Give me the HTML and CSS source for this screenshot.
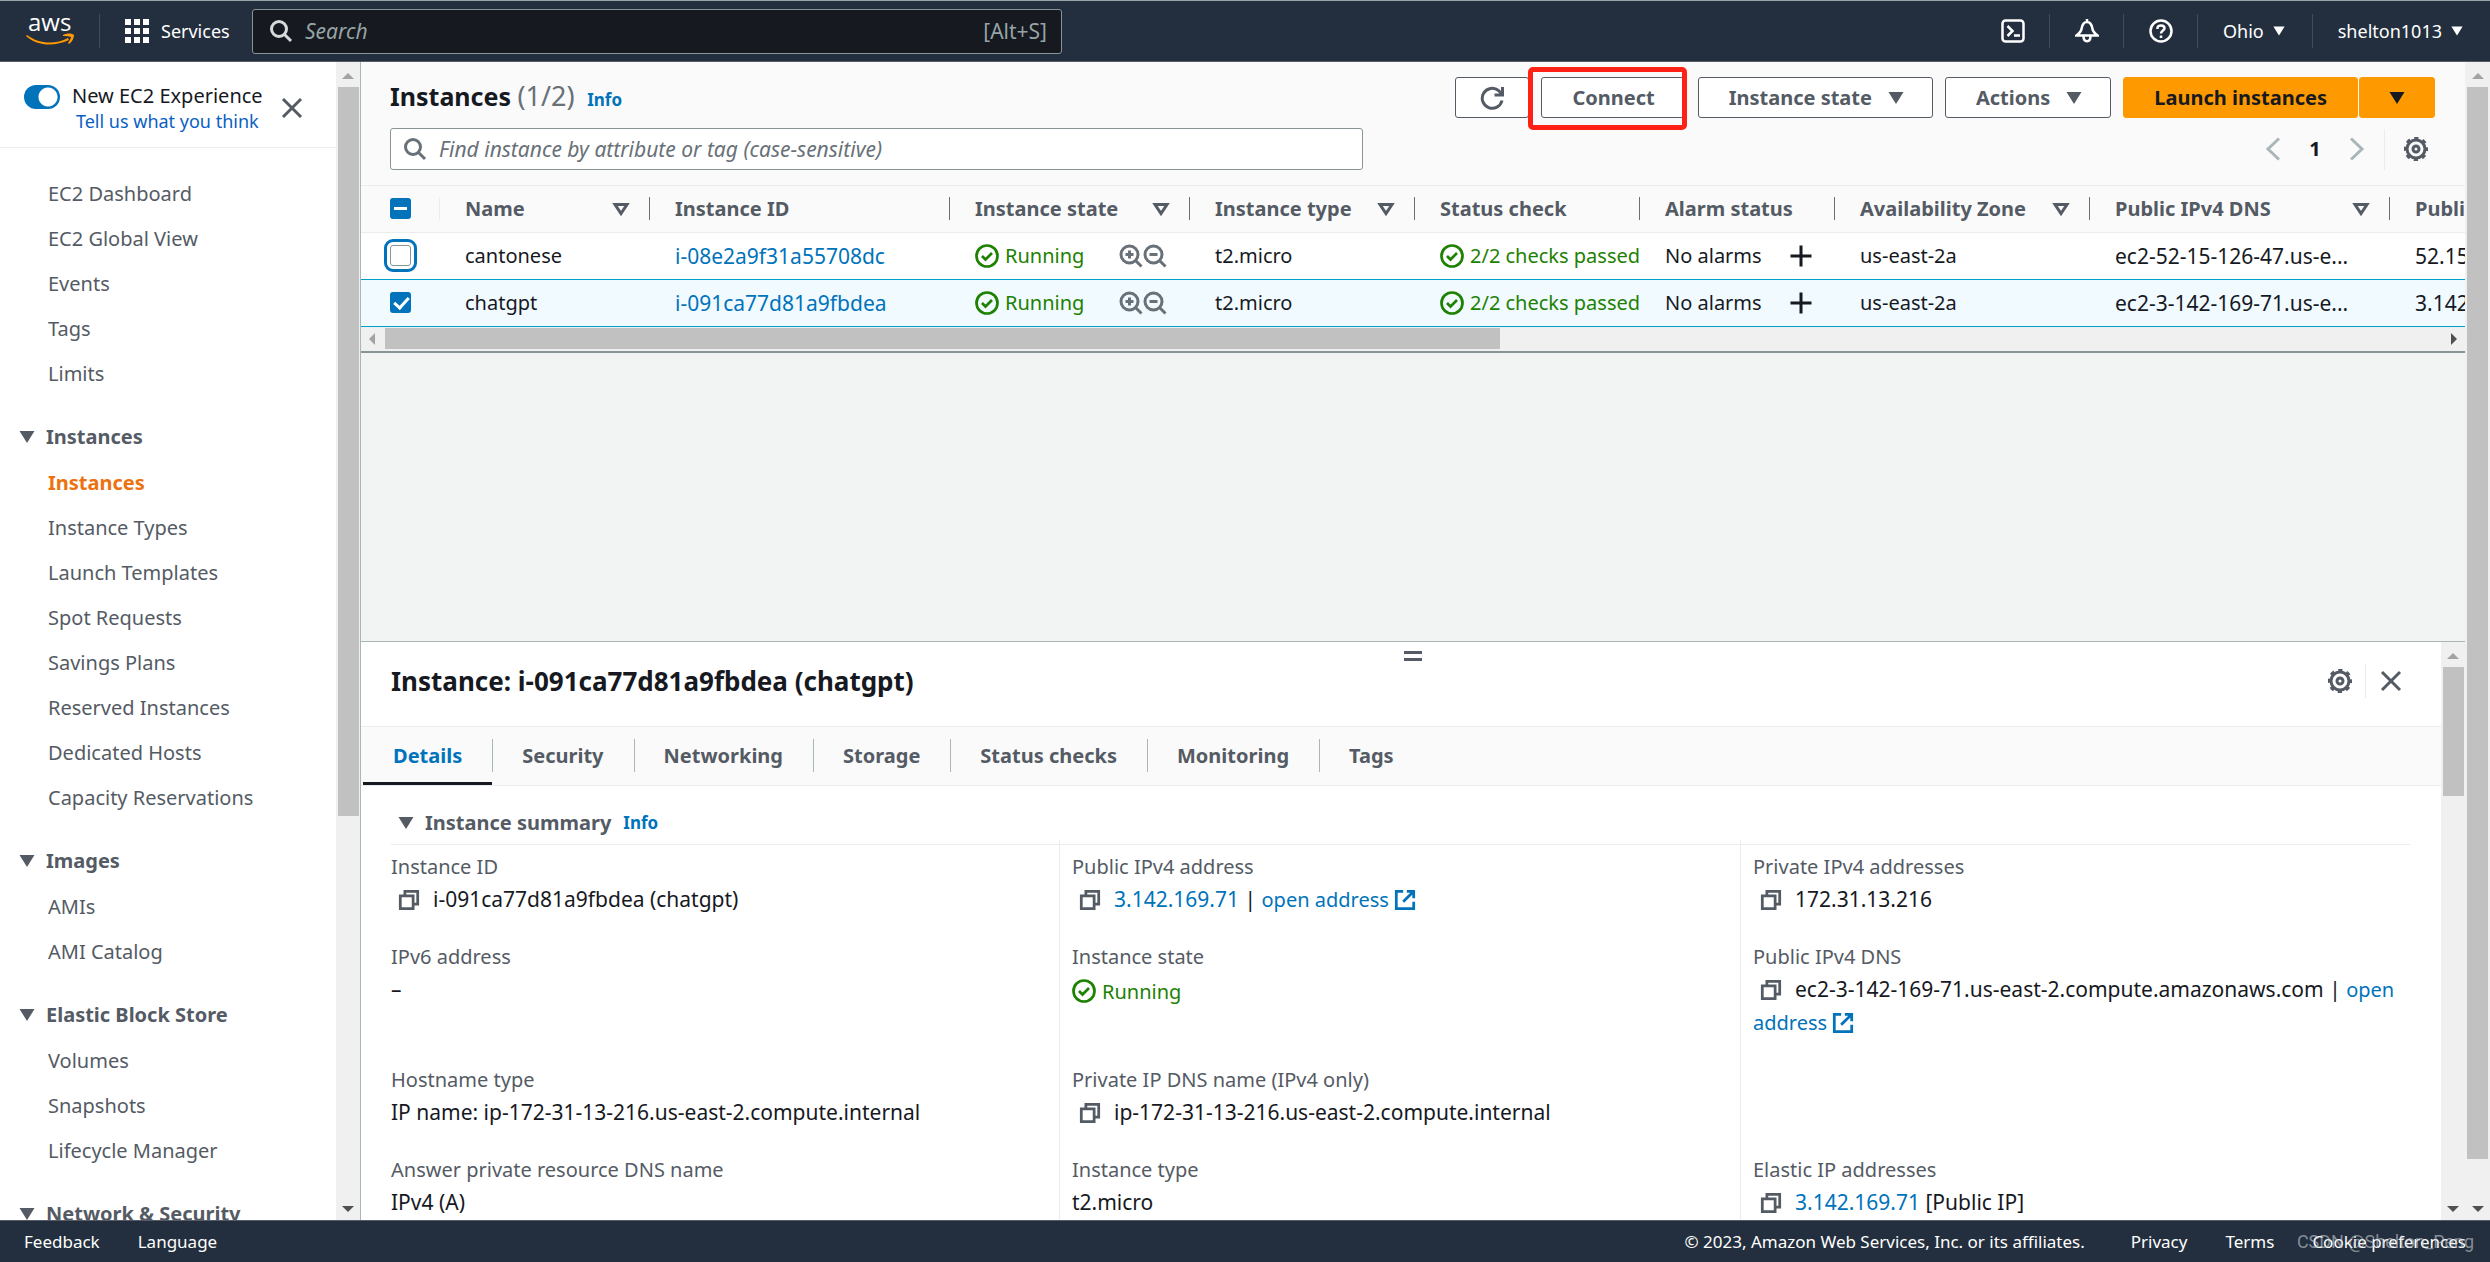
FILE: index.html
```html
<!DOCTYPE html>
<html lang="en">
<head>
	<meta charset="utf-8">
	<title>Instances | EC2 Management Console</title>
	<link rel="stylesheet" href="styles.css">
</head>
<body>
	<!-- icons -->
	<svg class="defs" width="0" height="0">
		<symbol id="search" viewBox="0 0 24 24"><circle cx="10" cy="10" r="7.5"/><path d="M15.5 15.5L22 22"/></symbol>
		<symbol id="close" viewBox="0 0 24 24"><path d="M3 3L21 21M21 3L3 21"/></symbol>
		<symbol id="down" viewBox="0 0 24 24"><path class="solid" d="M4.500 6h15L12 18z"/></symbol>
		<symbol id="sort" viewBox="0 0 24 24"><path d="M6 7.500h12L12 16.500z"/></symbol>
		<symbol id="check" viewBox="0 0 24 24"><circle cx="12" cy="12" r="10.5"/><path d="M7 12L10.500 15.500L17 9"/></symbol>
		<symbol id="zoomin" viewBox="0 0 24 24"><circle cx="10.500" cy="10.500" r="8.500"/><path d="M16.500 16.500L22.500 22.500M6.500 10.500h8M10.500 6.500v8"/></symbol>
		<symbol id="zoomout" viewBox="0 0 24 24"><circle cx="10.500" cy="10.500" r="8.500"/><path d="M16.500 16.500L22.500 22.500M6.500 10.500h8"/></symbol>
		<symbol id="plus" viewBox="0 0 24 24"><path d="M12 1.500v21M1.500 12h21"/></symbol>
		<symbol id="copy" viewBox="0 0 24 24"><path d="M2.500 7.500h14v14h-14z"/><path d="M7.500 7V2.500h14v14H17"/></symbol>
		<symbol id="external" viewBox="0 0 24 24"><path d="M10 2.500H2.500v19h19V14M14 2.500h7.500V10M21 3L10 14"/></symbol>
		<symbol id="gear" viewBox="0 0 24 24"><circle cx="12" cy="12" r="9"/><circle cx="12" cy="12" r="10.800" stroke-dasharray="4.200 4.280" stroke-dashoffset="2.100"/><circle cx="12" cy="12" r="3"/></symbol>
		<symbol id="prev" viewBox="0 0 24 24"><path d="M18 1.500L7 12L18 22.500"/></symbol>
		<symbol id="next" viewBox="0 0 24 24"><path d="M6 1.500L17 12L6 22.500"/></symbol>
		<symbol id="refresh" viewBox="0 0 24 24"><path d="M22 14.500A10 10 0 1 1 18.500 4.500L22 8M22.500 1v8h-8"/></symbol>
		<symbol id="shell" viewBox="0 0 24 24"><rect x="1.500" y="1.500" width="21" height="21" rx="3"/><path d="M6.500 7L11.500 12L6.500 17M13 16.500h6"/></symbol>
		<symbol id="bell" viewBox="0 0 24 24"><path d="M12 0v3M12 3C7.500 3 7 7 6.500 10C6 13 4 14.500 1.500 16.500H22.500C20 14.500 18 13 17.500 10C17 7 16.500 3 12 3zM8.500 17C8.500 24 15.500 24 15.500 17"/></symbol>
		<symbol id="help" viewBox="0 0 24 24"><circle cx="12" cy="12" r="10.500"/><path d="M8.500 10V9C8.500 5.500 15.500 5.500 15.500 9.200C15.500 11.500 12 11.500 12 14.500M12 16.500v2.500"/></symbol>
		<symbol id="grid" viewBox="0 0 24 24"><path class="solid" d="M0 0h6v6H0zM9 0h6v6H9zM18 0h6v6h-6zM0 9h6v6H0zM9 9h6v6H9zM18 9h6v6h-6zM0 18h6v6H0zM9 18h6v6H9zM18 18h6v6h-6z"/></symbol>
	</svg>

	<header class="topbar">
		<a class="logo" href="#" aria-label="AWS home">
			<svg width="50" height="34" viewBox="0 0 50 34">
				<text x="2" y="17">aws</text>
				<path class="smile" d="M1 21C13 30 29 31 42 24L43 26C28 33 11 32 0 22z"/>
				<path class="smile" d="M37 21C41 19 46 19 48 21C48 24 46 28 43 30L42 29C44 26 45 24 45 23C43 22 40 22 37 22z"/>
			</svg>
		</a>
		<button class="services"><svg class="icon"><use href="#grid"/></svg>Services</button>
		<label class="search dark">
			<svg class="icon"><use href="#search"/></svg>
			<input type="text" placeholder="Search" aria-label="Search">
			<span>[Alt+S]</span>
		</label>
		<div class="tools">
			<button aria-label="CloudShell"><svg class="icon"><use href="#shell"/></svg></button>
			<button aria-label="Notifications"><svg class="icon"><use href="#bell"/></svg></button>
			<button aria-label="Help"><svg class="icon"><use href="#help"/></svg></button>
			<button>Ohio<svg class="caret"><use href="#down"/></svg></button>
			<button>shelton1013<svg class="caret"><use href="#down"/></svg></button>
		</div>
	</header>

	<div class="page">
		<aside class="sidebar">
			<div class="side-content">
				<div class="experience">
					<input type="checkbox" class="toggle" id="newexp" checked>
					<div class="exp-text">
						<label for="newexp">New EC2 Experience</label>
						<a href="#">Tell us what you think</a>
					</div>
					<button class="plain" aria-label="Close navigation"><svg class="icon"><use href="#close"/></svg></button>
				</div>
				<nav>
					<ul>
						<li><a href="#">EC2 Dashboard</a></li>
						<li><a href="#">EC2 Global View</a></li>
						<li><a href="#">Events</a></li>
						<li><a href="#">Tags</a></li>
						<li><a href="#">Limits</a></li>
					</ul>
					<h3><svg class="icon"><use href="#down"/></svg>Instances</h3>
					<ul>
						<li><a class="current" href="#">Instances</a></li>
						<li><a href="#">Instance Types</a></li>
						<li><a href="#">Launch Templates</a></li>
						<li><a href="#">Spot Requests</a></li>
						<li><a href="#">Savings Plans</a></li>
						<li><a href="#">Reserved Instances</a></li>
						<li><a href="#">Dedicated Hosts</a></li>
						<li><a href="#">Capacity Reservations</a></li>
					</ul>
					<h3><svg class="icon"><use href="#down"/></svg>Images</h3>
					<ul>
						<li><a href="#">AMIs</a></li>
						<li><a href="#">AMI Catalog</a></li>
					</ul>
					<h3><svg class="icon"><use href="#down"/></svg>Elastic Block Store</h3>
					<ul>
						<li><a href="#">Volumes</a></li>
						<li><a href="#">Snapshots</a></li>
						<li><a href="#">Lifecycle Manager</a></li>
					</ul>
					<h3><svg class="icon"><use href="#down"/></svg>Network &amp; Security</h3>
				</nav>
			</div>
			<div class="scroll side-scroll"><i class="up"></i><b></b><i class="dn"></i></div>
		</aside>

		<main>
			<section class="list">
				<div class="list-head">
					<div class="title-row">
						<h1>Instances <span>(1/2)</span> <a class="info" href="#">Info</a></h1>
						<div class="actions">
							<button class="btn" aria-label="Refresh"><svg class="icon"><use href="#refresh"/></svg></button>
							<div class="marked"><button class="btn">Connect</button></div>
							<button class="btn">Instance state<svg class="icon"><use href="#down"/></svg></button>
							<button class="btn">Actions<svg class="icon"><use href="#down"/></svg></button>
							<div class="split">
								<button class="btn primary">Launch instances</button>
								<button class="btn primary" aria-label="More launch options"><svg class="icon"><use href="#down"/></svg></button>
							</div>
						</div>
					</div>
					<div class="filter-row">
						<label class="search">
							<svg class="icon"><use href="#search"/></svg>
							<input type="text" placeholder="Find instance by attribute or tag (case-sensitive)" aria-label="Find instance">
						</label>
						<div class="pager">
							<button class="plain arrow" aria-label="Previous page"><svg class="icon"><use href="#prev"/></svg></button>
							<strong>1</strong>
							<button class="plain arrow" aria-label="Next page"><svg class="icon"><use href="#next"/></svg></button>
							<button class="plain settings" aria-label="Preferences"><svg class="icon"><use href="#gear"/></svg></button>
						</div>
					</div>
				</div>

				<div class="table-wrap">
					<table>
						<colgroup>
							<col class="c-check"><col class="c-name"><col class="c-id"><col class="c-state"><col class="c-type">
							<col class="c-status"><col class="c-alarm"><col class="c-zone"><col class="c-dns"><col class="c-ip">
						</colgroup>
						<thead>
							<tr>
								<th><div><input type="checkbox" class="box some" aria-label="Select all"></div></th>
								<th><div>Name<svg class="icon"><use href="#sort"/></svg></div></th>
								<th><div>Instance ID</div></th>
								<th><div>Instance state<svg class="icon"><use href="#sort"/></svg></div></th>
								<th><div>Instance type<svg class="icon"><use href="#sort"/></svg></div></th>
								<th><div>Status check</div></th>
								<th><div>Alarm status</div></th>
								<th><div>Availability Zone<svg class="icon"><use href="#sort"/></svg></div></th>
								<th><div>Public IPv4 DNS<svg class="icon"><use href="#sort"/></svg></div></th>
								<th><div>Public IPv4</div></th>
							</tr>
						</thead>
						<tbody>
							<tr>
								<td><input type="checkbox" class="box focused" aria-label="Select cantonese"></td>
								<td>cantonese</td>
								<td class="num"><a href="#">i-08e2a9f31a55708dc</a></td>
								<td><div class="state"><span class="ok"><svg class="icon"><use href="#check"/></svg>Running</span><svg class="icon"><use href="#zoomin"/></svg><svg class="icon"><use href="#zoomout"/></svg></div></td>
								<td>t2.micro</td>
								<td><span class="ok"><svg class="icon"><use href="#check"/></svg>2/2 checks passed</span></td>
								<td><div class="alarm">No alarms<svg class="icon"><use href="#plus"/></svg></div></td>
								<td>us-east-2a</td>
								<td class="num">ec2-52-15-126-47.us-e...</td>
								<td class="num">52.15.126.47</td>
							</tr>
							<tr class="selected">
								<td><input type="checkbox" class="box" aria-label="Select chatgpt" checked></td>
								<td>chatgpt</td>
								<td class="num"><a href="#">i-091ca77d81a9fbdea</a></td>
								<td><div class="state"><span class="ok"><svg class="icon"><use href="#check"/></svg>Running</span><svg class="icon"><use href="#zoomin"/></svg><svg class="icon"><use href="#zoomout"/></svg></div></td>
								<td>t2.micro</td>
								<td><span class="ok"><svg class="icon"><use href="#check"/></svg>2/2 checks passed</span></td>
								<td><div class="alarm">No alarms<svg class="icon"><use href="#plus"/></svg></div></td>
								<td>us-east-2a</td>
								<td class="num">ec2-3-142-169-71.us-e...</td>
								<td class="num">3.142.169.71</td>
							</tr>
						</tbody>
					</table>
				</div>
				<div class="hscroll"><i class="lt"></i><b></b><i class="rt"></i></div>
			</section>

			<section class="panel">
				<div class="handle"></div>
				<div class="panel-content">
					<div class="panel-head">
						<h2>Instance: i-091ca77d81a9fbdea (chatgpt)</h2>
						<div class="panel-tools">
							<button class="plain" aria-label="Panel preferences"><svg class="icon"><use href="#gear"/></svg></button>
							<button class="plain" aria-label="Close panel"><svg class="icon"><use href="#close"/></svg></button>
						</div>
					</div>
					<div class="tabs">
						<button class="active">Details</button>
						<button>Security</button>
						<button>Networking</button>
						<button>Storage</button>
						<button>Status checks</button>
						<button>Monitoring</button>
						<button>Tags</button>
					</div>
					<div class="summary">
						<h3><svg class="icon"><use href="#down"/></svg>Instance summary <a class="info" href="#">Info</a></h3>
						<dl>
							<div><dt>Instance ID</dt><dd><svg class="icon copy"><use href="#copy"/></svg>i-091ca77d81a9fbdea (chatgpt)</dd></div>
							<div><dt>Public IPv4 address</dt><dd><svg class="icon copy"><use href="#copy"/></svg><a href="#">3.142.169.71</a> | <a class="open" href="#">open address <svg class="icon"><use href="#external"/></svg></a></dd></div>
							<div><dt>Private IPv4 addresses</dt><dd><svg class="icon copy"><use href="#copy"/></svg>172.31.13.216</dd></div>

							<div><dt>IPv6 address</dt><dd>–</dd></div>
							<div><dt>Instance state</dt><dd><span class="ok"><svg class="icon"><use href="#check"/></svg>Running</span></dd></div>
							<div><dt>Public IPv4 DNS</dt><dd><svg class="icon copy"><use href="#copy"/></svg>ec2-3-142-169-71.us-east-2.compute.amazonaws.com | <a class="open" href="#">open address <svg class="icon"><use href="#external"/></svg></a></dd></div>

							<div><dt>Hostname type</dt><dd>IP name: ip-172-31-13-216.us-east-2.compute.internal</dd></div>
							<div><dt>Private IP DNS name (IPv4 only)</dt><dd><svg class="icon copy"><use href="#copy"/></svg>ip-172-31-13-216.us-east-2.compute.internal</dd></div>
							<div></div>

							<div><dt>Answer private resource DNS name</dt><dd>IPv4 (A)</dd></div>
							<div><dt>Instance type</dt><dd>t2.micro</dd></div>
							<div><dt>Elastic IP addresses</dt><dd><svg class="icon copy"><use href="#copy"/></svg><a href="#">3.142.169.71</a> [Public IP]</dd></div>
						</dl>
					</div>
				</div>
				<div class="scroll panel-scroll"><i class="up"></i><b></b><i class="dn"></i></div>
			</section>
		</main>
		<div class="scroll page-scroll"><i class="up"></i><b></b><i class="dn"></i></div>
	</div>

	<footer>
		<a href="#">Feedback</a>
		<a href="#">Language</a>
		<span class="copyright">© 2023, Amazon Web Services, Inc. or its affiliates.</span>
		<a href="#">Privacy</a>
		<a href="#">Terms</a>
		<a href="#">Cookie preferences</a>
		<span class="watermark">CSDN @Shelton_Peng</span>
	</footer>
</body>
</html>
```

FILE: styles.css
```css
*{
	box-sizing: border-box;
	margin: 0;
	padding: 0;
}
body{
	height: 100vh;
	display: flex;
	flex-direction: column;
	overflow: hidden;
	font: 20px/30px "Noto Sans", "Open Sans", sans-serif;
	color: #16191f;
	background: #f2f3f3;
}
a{
	color: #0073bb;
	text-decoration: none;
}
ul{
	list-style: none;
}
button, input{
	font: inherit;
	color: inherit;
	border: 0;
	background: none;
}
.defs{
	position: absolute;
}
.icon{
	width: 24px;
	height: 24px;
	flex: none;
	fill: none;
	stroke: currentColor;
	stroke-width: 3;
}
.caret{
	width: 18px;
	height: 18px;
}
.solid{
	fill: currentColor;
	stroke: none;
}
.plain{
	display: flex;
	color: #545b64;
}

/* top bar */
.topbar{
	flex: none;
	display: flex;
	align-items: center;
	height: 62px;
	padding-right: 24px;
	border-top: 1px solid #95a5a6;
	border-bottom: 1px solid #545b64;
	background: #232f3e;
	color: #fff;
	font-size: 18px;
}
.logo{
	height: 34px;
	width: 100px;
	padding-left: 26px;
	border-right: 1px solid #414d5c;
}
.logo svg{
	display: block;
	overflow: visible;
}
.logo text{
	font: 500 24px "Open Sans", sans-serif;
	fill: #fff;
}
.smile{
	fill: #ff9900;
}
.services{
	display: flex;
	align-items: center;
	gap: 12px;
	width: 152px;
	padding-left: 25px;
}
.search{
	display: flex;
	align-items: center;
	gap: 12px;
	height: 42px;
	padding: 0 12px;
	border: 1px solid #879596;
	border-radius: 3px;
	background: #fff;
	color: #687078;
	font-size: 21px;
}
.search input{
	flex: 1;
	min-width: 0;
	outline: 0;
}
.search input::placeholder{
	color: inherit;
	font-style: italic;
	opacity: 1;
}
.dark{
	width: 810px;
	height: 45px;
	padding: 0 14px 0 16px;
	background: #16191f;
	color: #95a5a6;
}
.dark .icon{
	color: #d5dbdb;
}
.tools{
	display: flex;
	margin-left: auto;
}
.tools button{
	display: flex;
	align-items: center;
	gap: 6px;
	height: 34px;
	padding: 0 24px 0 25px;
	border-left: 1px solid #414d5c;
}
.tools button:first-child{
	border: 0;
}
.tools button:last-child{
	padding-right: 0;
}
.tools .icon{
	stroke-width: 2.5;
}

.page{
	flex: 1;
	min-height: 0;
	display: flex;
}

/* scroll bars */
.scroll{
	flex: none;
	width: 24px;
	display: flex;
	flex-direction: column;
	align-items: center;
	padding-top: 5px;
	background: #f0f0f0;
}
.scroll b{
	width: 21px;
	background: #c1c1c1;
}
.scroll i, .hscroll i{
	border: 6px solid transparent;
}
.up{
	margin-bottom: 8px;
	border-bottom-color: #a3a3a3 !important;
}
.dn{
	margin: auto 0 2px;
	border-top-color: #505050 !important;
}
.side-scroll b{
	height: 729px;
}
.page-scroll{
	width: 25px;
}
.page-scroll b{
	height: 93%;
}
.panel-scroll b{
	height: 129px;
}

/* sidebar */
.sidebar{
	flex: none;
	display: flex;
	width: 361px;
	background: #fff;
	border-right: 1px solid #aab7b8;
}
.side-content{
	flex: 1;
	overflow: hidden;
	color: #545b64;
}
.experience{
	display: flex;
	align-items: flex-start;
	height: 86px;
	padding: 20px 0 0 24px;
	border-bottom: 1px solid #eaeded;
	color: #16191f;
}
.toggle{
	appearance: none;
	width: 36px;
	height: 24px;
	margin: 3px 12px 0 0;
	border-radius: 12px;
	background: radial-gradient(circle at 24px 12px, #fff 9px, #0073bb 10px);
}
.exp-text{
	display: flex;
	flex-direction: column;
	align-items: center;
	line-height: 28px;
	white-space: nowrap;
}
.exp-text a{
	font-size: 18px;
	line-height: 22px;
	color: #0a5fc4;
}
.experience .plain{
	margin: 14px 0 0 17px;
}
nav{
	padding-top: 23px;
}
nav li{
	height: 45px;
	padding-left: 48px;
	line-height: 45px;
}
nav a{
	color: #545b64;
}
nav .current{
	color: #ec7211;
	font-weight: bold;
}
nav h3{
	display: flex;
	align-items: center;
	gap: 7px;
	height: 46px;
	margin-top: 18px;
	padding-left: 15px;
	font-size: 20px;
}

/* instance list */
main{
	flex: 1;
	min-width: 0;
	display: flex;
	flex-direction: column;
	justify-content: space-between;
}
.list{
	background: #fafafa;
	border-bottom: 2px solid #879596;
}
.list-head{
	padding: 15px 30px 15px 29px;
	border-bottom: 1px solid #eaeded;
}
.title-row, .filter-row{
	display: flex;
	justify-content: space-between;
}
h1{
	font-size: 25px;
	line-height: 38px;
}
h1 span{
	color: #687078;
	font-size: 27px;
	font-weight: normal;
}
.info{
	margin-left: 6px;
	font-size: 17px;
	font-weight: bold;
}
.actions{
	display: flex;
	gap: 12px;
}
.btn{
	display: flex;
	align-items: center;
	gap: 12px;
	height: 41px;
	padding: 0 30px;
	border: 1px solid #545b64;
	border-radius: 3px;
	background: #fff;
	color: #545b64;
	font-weight: bold;
}
.btn .icon{
	margin-right: -6px;
}
.btn[aria-label="Refresh"]{
	width: 74px;
	padding-left: 24px;
}
.marked{
	position: relative;
}
/* red frame round Connect */
.marked::after{
	content: "";
	position: absolute;
	inset: -10px -1px -11px -13px;
	border: 5px solid #ff2116;
	border-radius: 5px;
}
.split{
	display: flex;
	gap: 1px;
}
.primary{
	border-color: #ff9900;
	background: #ff9900;
	color: #16191f;
}
.primary .icon{
	margin: 0 -5px;
}
.filter-row{
	margin-top: 9px;
}
.filter-row .search{
	flex: 0 1 973px;
}
.pager{
	display: flex;
	align-items: center;
}
.arrow{
	color: #aab7b8;
}
.pager strong{
	width: 60px;
	text-align: center;
}
.settings{
	height: 41px;
	align-items: center;
	margin-left: 15px;
	padding: 0 7px 0 19px;
	border-left: 1px solid #eaeded;
}

.table-wrap{
	overflow: hidden;
}
table{
	table-layout: fixed;
	width: 2260px;
	border-collapse: collapse;
	background: #fff;
}
.c-check{ width: 79px; }
.c-name{ width: 210px; }
.c-id, .c-dns{ width: 300px; }
.c-state{ width: 240px; }
.c-type, .c-status{ width: 225px; }
.c-alarm{ width: 195px; }
.c-zone{ width: 255px; }
thead{
	background: #fafafa;
}
th{
	height: 46px;
	border-bottom: 1px solid #eaeded;
	color: #545b64;
	text-align: left;
	vertical-align: middle;
}
th div{
	display: flex;
	align-items: center;
	justify-content: space-between;
	height: 23px;
	padding: 0 16px 0 25px;
	border-right: 1px solid #687078;
	white-space: nowrap;
}
th:first-child div{
	padding-left: 29px;
	border-right-color: #eaeded;
}
td{
	height: 47px;
	padding-left: 25px;
	overflow: hidden;
	white-space: nowrap;
}
td:first-child{
	padding-left: 29px;
}
.num{
	font-size: 21px;
}
.selected td{
	border: 1px solid #00a1c9;
	border-width: 1px 0;
	background: #f1faff;
}
.box{
	appearance: none;
	display: block;
	width: 21px;
	height: 21px;
	border: 1px solid #879596;
	border-radius: 3px;
	background: #fff;
}
.some{
	border: 0;
	background: linear-gradient(#fff, #fff) center / 13px 3px no-repeat #0073bb;
}
.box:checked{
	border: 0;
	background: #0073bb;
}
.box:checked::after{
	content: "";
	display: block;
	width: 6px;
	height: 12px;
	margin: 2px 0 0 7px;
	border: solid #fff;
	border-width: 0 3px 3px 0;
	transform: rotate(42deg);
}
.focused{
	outline: 3px solid #0073bb;
	outline-offset: 3px;
}
.ok{
	display: inline-flex;
	align-items: center;
	gap: 6px;
	color: #1d8102;
	font-size: 20px;
	vertical-align: middle;
}
.ok .icon{
	stroke-width: 2.7;
}
.state, .alarm{
	display: flex;
	align-items: center;
	color: #687078;
}
.state .ok{
	width: 144px;
}
.alarm{
	gap: 27px;
	color: #16191f;
}
.hscroll{
	display: flex;
	align-items: center;
	height: 24px;
	background: #f0f0f0;
}
.hscroll b{
	width: 53%;
	height: 21px;
	margin-left: 10px;
	background: #c1c1c1;
}
.lt{
	margin-left: 2px;
	border-right-color: #a3a3a3 !important;
}
.rt{
	margin-left: auto;
	margin-right: 2px;
	border-left-color: #505050 !important;
}

/* split panel */
.panel{
	position: relative;
	display: flex;
	height: 50%;
	border-top: 1px solid #aab7b8;
	background: #fff;
}
.panel-content{
	flex: 1;
	min-width: 0;
	overflow: hidden;
}
.handle{
	position: absolute;
	top: 9px;
	left: calc(50% - 9px);
	width: 18px;
	height: 10px;
	border: solid #545b64;
	border-width: 3px 0;
}
.panel-head{
	display: flex;
	align-items: center;
	justify-content: space-between;
	height: 85px;
	padding: 0 36px 6px 30px;
	border-bottom: 1px solid #eaeded;
}
h2{
	font-size: 26px;
}
.panel-tools{
	display: flex;
}
.panel-tools .plain{
	align-items: center;
	height: 34px;
	padding: 0 13px;
}
.panel-tools .plain + .plain{
	padding-right: 2px;
	border-left: 1px solid #eaeded;
}
.tabs{
	display: flex;
	height: 59px;
	padding-left: 2px;
	border-bottom: 1px solid #eaeded;
	background: #fafafa;
	color: #545b64;
}
.tabs button{
	position: relative;
	padding: 0 30px;
	font-weight: bold;
}
.tabs button + button::before{
	content: "";
	position: absolute;
	left: 0;
	top: 12px;
	height: 33px;
	border-left: 1px solid #aab7b8;
}
.tabs .active{
	border-top: 3px solid transparent;
	border-bottom: 3px solid #16191f;
	color: #0073bb;
}
.summary{
	padding: 16px 31px 0 30px;
}
.summary h3{
	display: flex;
	align-items: center;
	height: 43px;
	padding-left: 3px;
	border-bottom: 1px solid #eaeded;
	color: #545b64;
	font-size: 20px;
}
.summary h3 .icon{
	margin-right: 7px;
}
.summary .info{
	margin-left: 12px;
}
dl{
	display: grid;
	grid-template-columns: 1fr 1fr 1fr;
	column-gap: 24px;
	line-height: 33px;
}
dl > div{
	position: relative;
	padding: 5px 0 19px;
}
dl > div:not(:nth-child(3n+1))::before{
	content: "";
	position: absolute;
	left: -13px;
	top: -5px;
	bottom: 0;
	border-left: 1px solid #eaeded;
}
dt{
	color: #545b64;
}
dd{
	font-size: 21px;
}
dd .icon{
	width: 22px;
	height: 22px;
	vertical-align: -4px;
}
.open{
	font-size: 20px;
}
.copy{
	margin: 0 13px 0 7px;
	color: #545b64;
}
dd .ok .icon{
	width: 24px;
	height: 24px;
}

footer{
	position: relative;
	flex: none;
	display: flex;
	align-items: center;
	gap: 38px;
	height: 42px;
	padding: 0 24px;
	border-top: 1px solid #545b64;
	background: #232f3e;
	color: #fff;
	font-size: 17px;
}
footer a{
	color: #fff;
}
.copyright{
	margin-left: auto;
	margin-right: 8px;
}
.watermark{
	position: absolute;
	right: 16px;
	font: 18px "Roboto", sans-serif;
	color: rgba(200, 205, 210, .6);
}
```
